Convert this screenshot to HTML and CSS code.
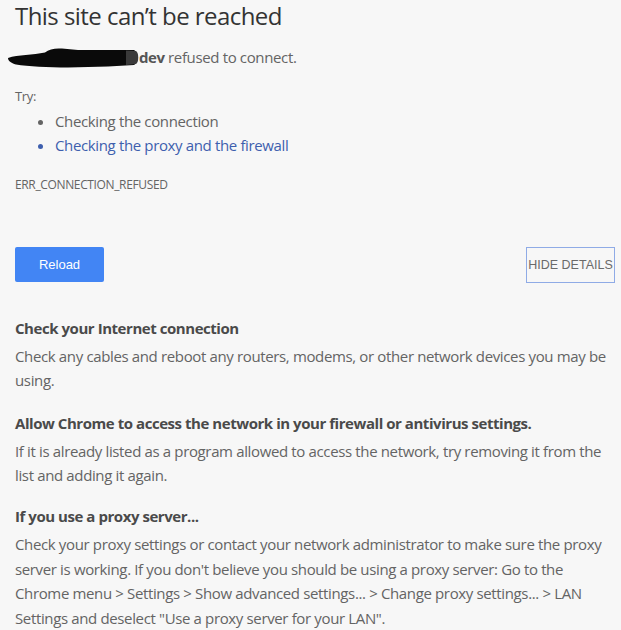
FILE: index.html
```html
<!DOCTYPE html>
<html lang="en">
<head>
<meta charset="utf-8">
<title>This site can't be reached</title>
<link rel="stylesheet" href="styles.css">
</head>
<body>
<div class="page">
  <h1 class="title">This site can’t be reached</h1>
  <p class="summary"><svg class="redact" width="131" height="20" viewBox="0 0 131 20" aria-hidden="true"><path d="M0,10 C10,6.5 25,7 37,4.5 C41,1 47,0 54,0.5 L70,2 L126,2 C131,4 131,15 126,17 L100,18.5 L60,19.5 C40,19.5 20,18.5 8,16.5 C3,15 0,13 0,10 Z" fill="#0a0a0a"/><path d="M118,2.5 L128,3 C131,5 131,14 128,16 L118,17 Z" fill="#3a3a3a"/></svg><b class="host">dev</b> refused to connect.</p>
  <p class="try">Try:</p>
  <ul class="suggestions">
    <li>Checking the connection</li>
    <li class="link">Checking the proxy and the firewall</li>
  </ul>
  <div class="code">ERR_CONNECTION_REFUSED</div>
  <div class="buttons">
    <button class="reload">Reload</button>
    <button class="details">HIDE DETAILS</button>
  </div>
  <h2 class="head first">Check your Internet connection</h2>
  <p class="body">Check any cables and reboot any routers, modems, or other network devices you may be using.</p>
  <h2 class="head">Allow Chrome to access the network in your firewall or antivirus settings.</h2>
  <p class="body">If it is already listed as a program allowed to access the network, try removing it from the list and adding it again.</p>
  <h2 class="head last">If you use a proxy server...</h2>
  <p class="body proxy">Check your proxy settings or contact your network administrator to make sure the proxy server is working. If you don't believe you should be using a proxy server: Go to the Chrome menu &gt; Settings &gt; Show advanced settings... &gt; Change proxy settings... &gt; LAN Settings and deselect "Use a proxy server for your LAN".</p>
</div>
</body>
</html>
```

FILE: styles.css
```css
html, body {
  margin: 0;
  padding: 0;
  background: #f7f7f7;
}

body {
  font-family: "Open Sans", "Noto Sans", sans-serif;
  color: #646464;
  overflow: hidden;
}

.page {
  width: 600px;
  padding-left: 15px;
  letter-spacing: -0.36px;
}

.title {
  margin: 1px 0 0;
  font-size: 24px;
  line-height: 30px;
  font-weight: 400;
  color: #333;
  letter-spacing: -0.55px;
}

.summary {
  margin: 14px 0 0;
  font-size: 15px;
  line-height: 24px;
}

.redact {
  vertical-align: -5px;
  margin-left: -7px;
}

.host {
  font-weight: 700;
  color: #555;
  letter-spacing: -0.45px;
}

.try {
  margin: 15px 0 0;
  font-size: 13px;
  line-height: 24px;
}

.suggestions {
  margin: 1px 0 0;
  padding-left: 40px;
  font-size: 15px;
  line-height: 24px;
}

.suggestions .link {
  color: #3e5fae;
}

.code {
  margin-top: 20px;
  font-size: 12px;
  line-height: 16px;
  color: #646464;
}

.buttons {
  display: flex;
  justify-content: space-between;
  margin-top: 54px;
}

.buttons button {
  font-family: "Liberation Sans", Arial, sans-serif;
  letter-spacing: 0;
  padding: 0;
  cursor: pointer;
}

.reload {
  width: 89px;
  height: 35px;
  border: 0;
  border-radius: 2px;
  background: #4285f4;
  color: #fff;
  font-size: 13px;
}

.details {
  width: 89px;
  height: 36px;
  border: 1px solid #8fabe6;
  background: transparent;
  color: #6a6a6a;
  font-size: 12.5px;
  white-space: nowrap;
  display: flex;
  align-items: center;
  justify-content: center;
}

.head {
  margin: 19px 0 0;
  font-size: 15px;
  line-height: 24px;
  font-weight: 700;
  color: #4a4a4a;
  letter-spacing: -0.45px;
}

.head.first {
  margin-top: 33px;
}

.head.last {
  margin-top: 17px;
}

.body {
  margin: 4px 0 0;
  font-size: 15px;
  line-height: 24px;
}

.body.proxy {
  line-height: 24.5px;
}
```
